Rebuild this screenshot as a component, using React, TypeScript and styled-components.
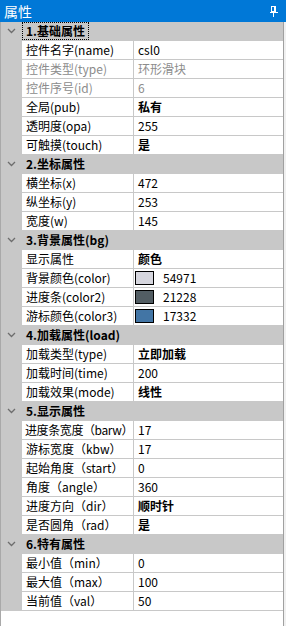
import React from "react";
import styled, { createGlobalStyle } from "styled-components";

const GlobalStyle = createGlobalStyle`
    html, body {
        margin: 0;
        padding: 0;
        background: #ffffff;
    }
    body {
        font-family: "Noto Sans CJK SC", "Noto Sans", sans-serif;
        font-size: 12px;
    }
`;

const LINE = "#c8c8c8";

const Panel = styled.div`
    width: 286px;
    height: 626px;
    display: flex;
    flex-direction: column;
    overflow: hidden;
    background: #f0f0f0;
`;

const TitleBar = styled.div`
    height: 22px;
    flex: none;
    background: #0078d7;
    color: #ffffff;
    display: flex;
    align-items: center;
    justify-content: space-between;
    padding: 0 8px 0 4px;
    font-size: 14px;
    line-height: 22px;
    box-sizing: border-box;
`;

const Grid = styled.div`
    flex: 1;
    display: flex;
    flex-direction: column;
    background: #ffffff;
    border-left: 1px solid #a9a9a9;
    border-right: 1px solid #a0a0a0;
    margin-right: 2px;
`;

const CategoryRow = styled.div`
    height: 18px;
    border-bottom: 1px solid ${LINE};
    background: ${LINE};
    display: flex;
    align-items: center;
`;

const Chevron = styled.div`
    width: 21px;
    display: flex;
    justify-content: center;
    align-items: center;
`;

const CategoryTitle = styled.span<{ $focused?: boolean }>`
    font-weight: bold;
    color: #000000;
    line-height: 16px;
    padding: 0 3px;
    margin-left: 1px;
    outline: ${(p) => (p.$focused ? "1px dotted #000000" : "none")};
    outline-offset: 0px;
`;

const PropRow = styled.div`
    height: 18px;
    border-bottom: 1px solid ${LINE};
    display: grid;
    grid-template-columns: 21px 112px 1fr;
`;

const Margin = styled.div`
    background: ${LINE};
`;

const Label = styled.div<{ $disabled?: boolean; $tight?: boolean }>`
    border-right: 1px solid ${LINE};
    padding-left: ${(p) => (p.$tight ? "3px" : "4px")};
    line-height: 18px;
    white-space: nowrap;
    overflow: hidden;
    letter-spacing: ${(p) => (p.$tight ? "-0.4px" : "0")};
    color: ${(p) => (p.$disabled ? "#8c8c8c" : "#000000")};
`;

const Value = styled.div<{ $disabled?: boolean; $bold?: boolean }>`
    display: flex;
    align-items: center;
    padding-left: 4px;
    line-height: 18px;
    white-space: nowrap;
    overflow: hidden;
    font-weight: ${(p) => (p.$bold ? "bold" : "normal")};
    color: ${(p) => (p.$disabled ? "#8c8c8c" : "#000000")};
`;

const Swatch = styled.span<{ $color: string }>`
    width: 17px;
    height: 12px;
    margin-left: -3px;
    margin-right: 9px;
    border: 1px solid #000000;
    background: ${(p) => p.$color};
    flex: none;
`;

const Filler = styled.div`
    flex: 1;
`;

type Prop = {
    label: string;
    value: string;
    disabled?: boolean;
    bold?: boolean;
    color?: string;
    tight?: boolean;
};

type Group = { title: string; focused?: boolean; rows: Prop[] };

const groups: Group[] = [
    {
        title: "1.基础属性",
        focused: true,
        rows: [
            { label: "控件名字(name)", value: "csl0" },
            { label: "控件类型(type)", value: "环形滑块", disabled: true },
            { label: "控件序号(id)", value: "6", disabled: true },
            { label: "全局(pub)", value: "私有", bold: true },
            { label: "透明度(opa)", value: "255" },
            { label: "可触摸(touch)", value: "是", bold: true },
        ],
    },
    {
        title: "2.坐标属性",
        rows: [
            { label: "横坐标(x)", value: "472" },
            { label: "纵坐标(y)", value: "253" },
            { label: "宽度(w)", value: "145" },
        ],
    },
    {
        title: "3.背景属性(bg)",
        rows: [
            { label: "显示属性", value: "颜色", bold: true },
            { label: "背景颜色(color)", value: "54971", color: "#d6d6de" },
            { label: "进度条(color2)", value: "21228", color: "#525d63" },
            { label: "游标颜色(color3)", value: "17332", color: "#4275a5" },
        ],
    },
    {
        title: "4.加载属性(load)",
        rows: [
            { label: "加载类型(type)", value: "立即加载", bold: true },
            { label: "加载时间(time)", value: "200" },
            { label: "加载效果(mode)", value: "线性", bold: true },
        ],
    },
    {
        title: "5.显示属性",
        rows: [
            { label: "进度条宽度（barw）", value: "17", tight: true },
            { label: "游标宽度（kbw）", value: "17" },
            { label: "起始角度（start）", value: "0" },
            { label: "角度（angle）", value: "360" },
            { label: "进度方向（dir）", value: "顺时针", bold: true },
            { label: "是否圆角（rad）", value: "是", bold: true },
        ],
    },
    {
        title: "6.特有属性",
        rows: [
            { label: "最小值（min）", value: "0" },
            { label: "最大值（max）", value: "100" },
            { label: "当前值（val）", value: "50" },
        ],
    },
];

const PinIcon = () => (
    <svg width="8" height="11" viewBox="0 0 8 11">
        <rect x="1.5" y="0.5" width="4" height="5" fill="none" stroke="#ffffff" />
        <rect x="4" y="1" width="1.5" height="5" fill="#ffffff" />
        <rect x="0" y="6" width="8" height="1" fill="#ffffff" />
        <rect x="3" y="7" width="1" height="4" fill="#ffffff" />
    </svg>
);

const ChevronIcon = () => (
    <svg width="9" height="6" viewBox="0 0 9 6">
        <path d="M1 1 L4.5 4.5 L8 1" fill="none" stroke="#6d6d6d" strokeWidth="1.3" />
    </svg>
);

const App = () => {
    return (
        <Panel>
            <GlobalStyle />
            <TitleBar>
                <span>属性</span>
                <PinIcon />
            </TitleBar>
            <Grid>
                {groups.map((group) => (
                    <React.Fragment key={group.title}>
                        <CategoryRow>
                            <Chevron>
                                <ChevronIcon />
                            </Chevron>
                            <CategoryTitle $focused={group.focused}>{group.title}</CategoryTitle>
                        </CategoryRow>
                        {group.rows.map((row) => (
                            <PropRow key={row.label}>
                                <Margin />
                                <Label $disabled={row.disabled} $tight={row.tight}>
                                    {row.label}
                                </Label>
                                <Value $disabled={row.disabled} $bold={row.bold}>
                                    {row.color && <Swatch $color={row.color} />}
                                    {row.value}
                                </Value>
                            </PropRow>
                        ))}
                    </React.Fragment>
                ))}
                <Filler />
            </Grid>
        </Panel>
    );
};

export default App;
